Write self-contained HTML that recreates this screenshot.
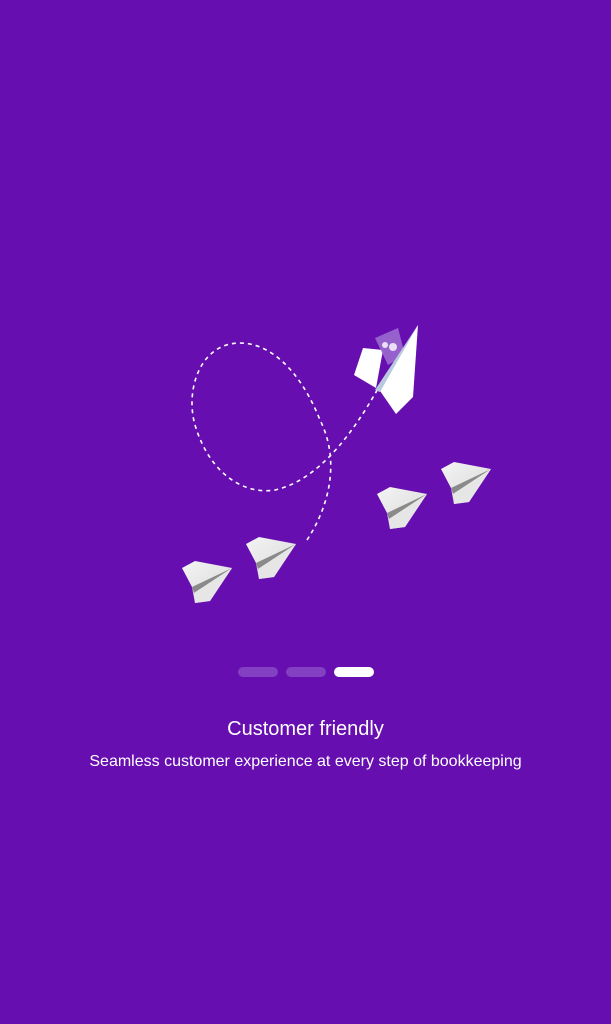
<!DOCTYPE html>
<html><head><style>
html,body{margin:0;padding:0;width:611px;height:1024px;background:#660eb0;overflow:hidden;font-family:"Liberation Sans",sans-serif;}
.t{position:absolute;left:0;width:611px;text-align:center;color:#fff;}
</style></head><body>
<svg width="611" height="1024" style="position:absolute;left:0;top:0">
<defs>
<linearGradient id="g" x1="0" y1="0" x2="1" y2="1"><stop offset="0" stop-color="#f4f4f4"/><stop offset="1" stop-color="#d8d8d8"/></linearGradient>
<g id="p"><polygon points="0,7 13,0 50,7 28,40 13,42 10,26" fill="url(#g)"/><polygon points="10,26 50,7 12,32" fill="#8a8a8a"/><polygon points="12,32 50,7 28,40 13,42" fill="#e6e6e6"/></g>
</defs>
<path d="M307,540 C330,505 340,460 320,420 C300,370 270,343 240,343 C200,343 185,390 195,425 C210,475 245,495 275,490 C320,480 355,430 380,385" fill="none" stroke="#fff" stroke-width="1.6" stroke-dasharray="4,4"/>
<use href="#p" x="182" y="561"/>
<use href="#p" x="246" y="537"/>
<use href="#p" x="377" y="487"/>
<use href="#p" x="441" y="462"/>
<polygon points="354,375 363,348 383,350 376,388" fill="#fff"/>
<polygon points="375,338 398,328 405,355 388,365" fill="#9c6ad0" opacity="0.9"/>
<circle cx="385" cy="345" r="3" fill="#fff" opacity="0.8"/><circle cx="393" cy="347" r="4" fill="#fff" opacity="0.8"/>
<polygon points="418,325 378,388 396,414 413,397" fill="#fff"/>
<polygon points="418,325 375,390 380,392" fill="#b9c9e0"/>
</svg>
<div style="position:absolute;left:238px;top:667px;width:40px;height:10px;border-radius:5px;background:#8340c3"></div>
<div style="position:absolute;left:286px;top:667px;width:40px;height:10px;border-radius:5px;background:#8340c3"></div>
<div style="position:absolute;left:334px;top:667px;width:40px;height:10px;border-radius:5px;background:#fff"></div>
<div class="t" style="top:718px;font-size:20px;">Customer friendly</div>
<div class="t" style="top:753px;font-size:16px;">Seamless customer experience at every step of bookkeeping</div>
</body></html>
